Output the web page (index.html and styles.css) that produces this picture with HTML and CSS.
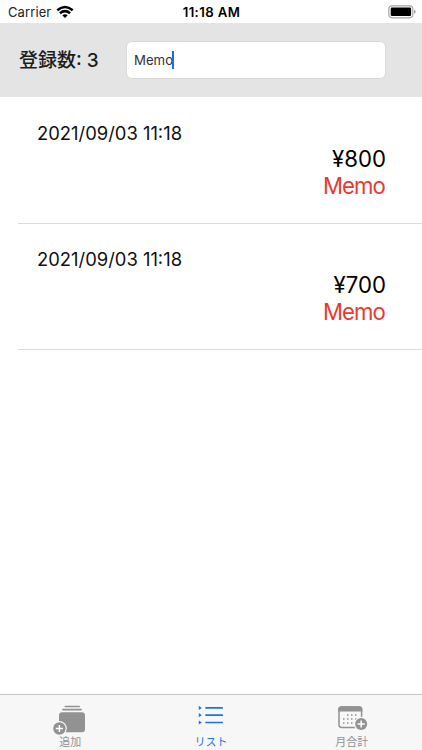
FILE: index.html
```html
<!DOCTYPE html>
<html lang="ja">
<head>
  <meta charset="UTF-8" />
  <meta name="viewport" content="width=device-width, initial-scale=1.0"/>
  <title>リスト</title>
  <link rel="stylesheet" href="styles.css">
</head>
<body>

  <div class="status-bar">
    <div class="carrier">
      <span>Carrier</span>
      <svg class="wifi" width="18" height="14" viewBox="0 0 18 14">
        <g fill="none" stroke="#000" stroke-width="2.5">
          <path d="M1.3 5.3 Q9 -1.2 16.7 5.3"/>
          <path d="M3.9 8.3 Q9 4 14.1 8.3"/>
        </g>
        <path d="M6.3 10.3 Q9 8.2 11.7 10.3 L9 12.9 Z"/>
      </svg>
    </div>
    <div class="time">11:18 AM</div>
    <div class="battery">
      <svg width="28" height="14" viewBox="0 0 28 14">
        <rect x="0.8" y="0.8" width="24" height="12" rx="3.2" fill="none" stroke="#a5a3a6" stroke-width="1.2"/>
        <rect x="2.7" y="2.6" width="20.4" height="8.4" rx="1.3"/>
        <path d="M26 4.8 Q27.8 5.2 27.8 6.8 Q27.8 8.4 26 8.8 Z" fill="#a5a3a6"/>
      </svg>
    </div>
  </div>

  <div class="header">
    <h1>登録数: 3</h1>
    <div class="search"><span>Memo</span><i class="caret"></i></div>
  </div>

  <div class="list">
    <div class="item">
      <div class="date">2021/09/03 11:18</div>
      <div class="price">¥800</div>
      <div class="memo">Memo</div>
    </div>
    <div class="item">
      <div class="date">2021/09/03 11:18</div>
      <div class="price">¥700</div>
      <div class="memo">Memo</div>
    </div>
  </div>

  <div class="tab-bar">
    <div class="tab">
      <svg width="40" height="32" viewBox="0 0 40 32">
        <rect x="14.5" y="2.8" width="15.5" height="1.4" rx="0.7" fill="#929292"/>
        <rect x="12" y="5.8" width="20" height="1.6" rx="0.8" fill="#929292"/>
        <rect x="9" y="9.2" width="26" height="20" rx="3.2" fill="#929292"/>
        <circle cx="9.4" cy="25.5" r="7.4" fill="#f7f7f7"/>
        <circle cx="9.4" cy="25.5" r="6.2" fill="#929292"/>
        <path d="M5.8 25.5 H13 M9.4 21.9 V29.1" stroke="#fff" stroke-width="1.5"/>
      </svg>
      <span>追加</span>
    </div>
    <div class="tab active">
      <svg width="40" height="32" viewBox="0 0 40 32">
        <path d="M7.8 2.8 L10.8 4.9 L7.8 7 Z M7.8 10.1 L10.8 12.2 L7.8 14.3 Z M7.8 17.4 L10.8 19.5 L7.8 21.6 Z" fill="#1a73e8"/>
        <path d="M15 4.9 H31.2 M15 12.2 H31.2 M15 19.5 H31.2" stroke="#1a73e8" stroke-width="1.7" stroke-linecap="round"/>
      </svg>
      <span>リスト</span>
    </div>
    <div class="tab">
      <svg width="40" height="32" viewBox="0 0 40 32">
        <rect x="7" y="4" width="22.6" height="20.6" rx="3" fill="none" stroke="#929292" stroke-width="1.5"/>
        <path d="M6.2 8.6 V6.2 Q6.2 3.2 9.2 3.2 H27.4 Q30.4 3.2 30.4 6.2 V8.6 Z" fill="#929292"/>
        <path d="M15 12 H26.5 M11 16 H26.5 M11 20 H22.5" stroke="#929292" stroke-width="1.5" stroke-dasharray="1.5 2.5"/>
        <circle cx="29.2" cy="21" r="7.2" fill="#f7f7f7"/>
        <circle cx="29.2" cy="21" r="6" fill="#929292"/>
        <path d="M25.6 21 H32.8 M29.2 17.4 V24.6" stroke="#fff" stroke-width="1.5"/>
      </svg>
      <span>月合計</span>
    </div>
  </div>

</body>
</html>
```
FILE: styles.css
```css
* {
  box-sizing: border-box;
}

body {
  margin: 0;
  height: 100vh;
  display: flex;
  flex-direction: column;
  font-family: Inter, "Noto Sans CJK JP", sans-serif;
  background: #fff;
  color: #000;
}

.status-bar {
  height: 23px;
  flex: none;
  display: grid;
  grid-template-columns: 1fr auto 1fr;
  align-items: center;
  padding: 1px 6px 0 8px;
  font-size: 13px;
}

.carrier {
  display: flex;
  align-items: center;
  gap: 5px;
  color: #222;
  letter-spacing: 0.1px;
}

.time {
  font-weight: 600;
  font-size: 13.2px;
  letter-spacing: 0.4px;
  margin-right: 1px;
}

.battery {
  display: flex;
  justify-content: flex-end;
}

.header {
  height: 74px;
  flex: none;
  display: flex;
  align-items: center;
  padding: 0 36px 0 19px;
  background: #e4e4e4;
}

.header h1 {
  width: 107px;
  margin: 0;
  padding-top: 2px;
  font-size: 19px;
  font-weight: 500;
  line-height: 28px;
  color: #1c1c1c;
  white-space: nowrap;
}

.search {
  flex: 1;
  height: 38px;
  display: flex;
  align-items: center;
  padding: 0 7px;
  border: 1px solid #dadada;
  border-radius: 6px;
  background: #fff;
  font-size: 13.2px;
  color: #333;
}

.caret {
  width: 2px;
  height: 18px;
  margin-left: -1px;
  background: #1a6df0;
}

.list {
  flex: 1;
  padding: 1px 0 0 18px;
}

.item {
  height: 126px;
  padding: 23px 36px 0 19px;
  border-bottom: 1px solid #dcdcdc;
}

.date {
  margin-bottom: -1px;
  font-size: 18.4px;
  line-height: 25px;
  color: #111;
}

.price,
.memo {
  font-size: 22.2px;
  line-height: 27px;
  text-align: right;
}

.memo {
  color: #e73a30;
  letter-spacing: -0.9px;
  padding-right: 1px;
}

.tab-bar {
  height: 56px;
  flex: none;
  display: flex;
  border-top: 1px solid #c4c4c4;
  background: #f7f7f7;
}

.tab {
  flex: 1;
  display: flex;
  flex-direction: column;
  align-items: center;
  padding-top: 8px;
  font-size: 11px;
  font-weight: 400;
  color: #929292;
}

.tab svg {
  flex: none;
}

.tab span {
  line-height: 14px;
}

.active {
  color: #1a73e8;
}
```
